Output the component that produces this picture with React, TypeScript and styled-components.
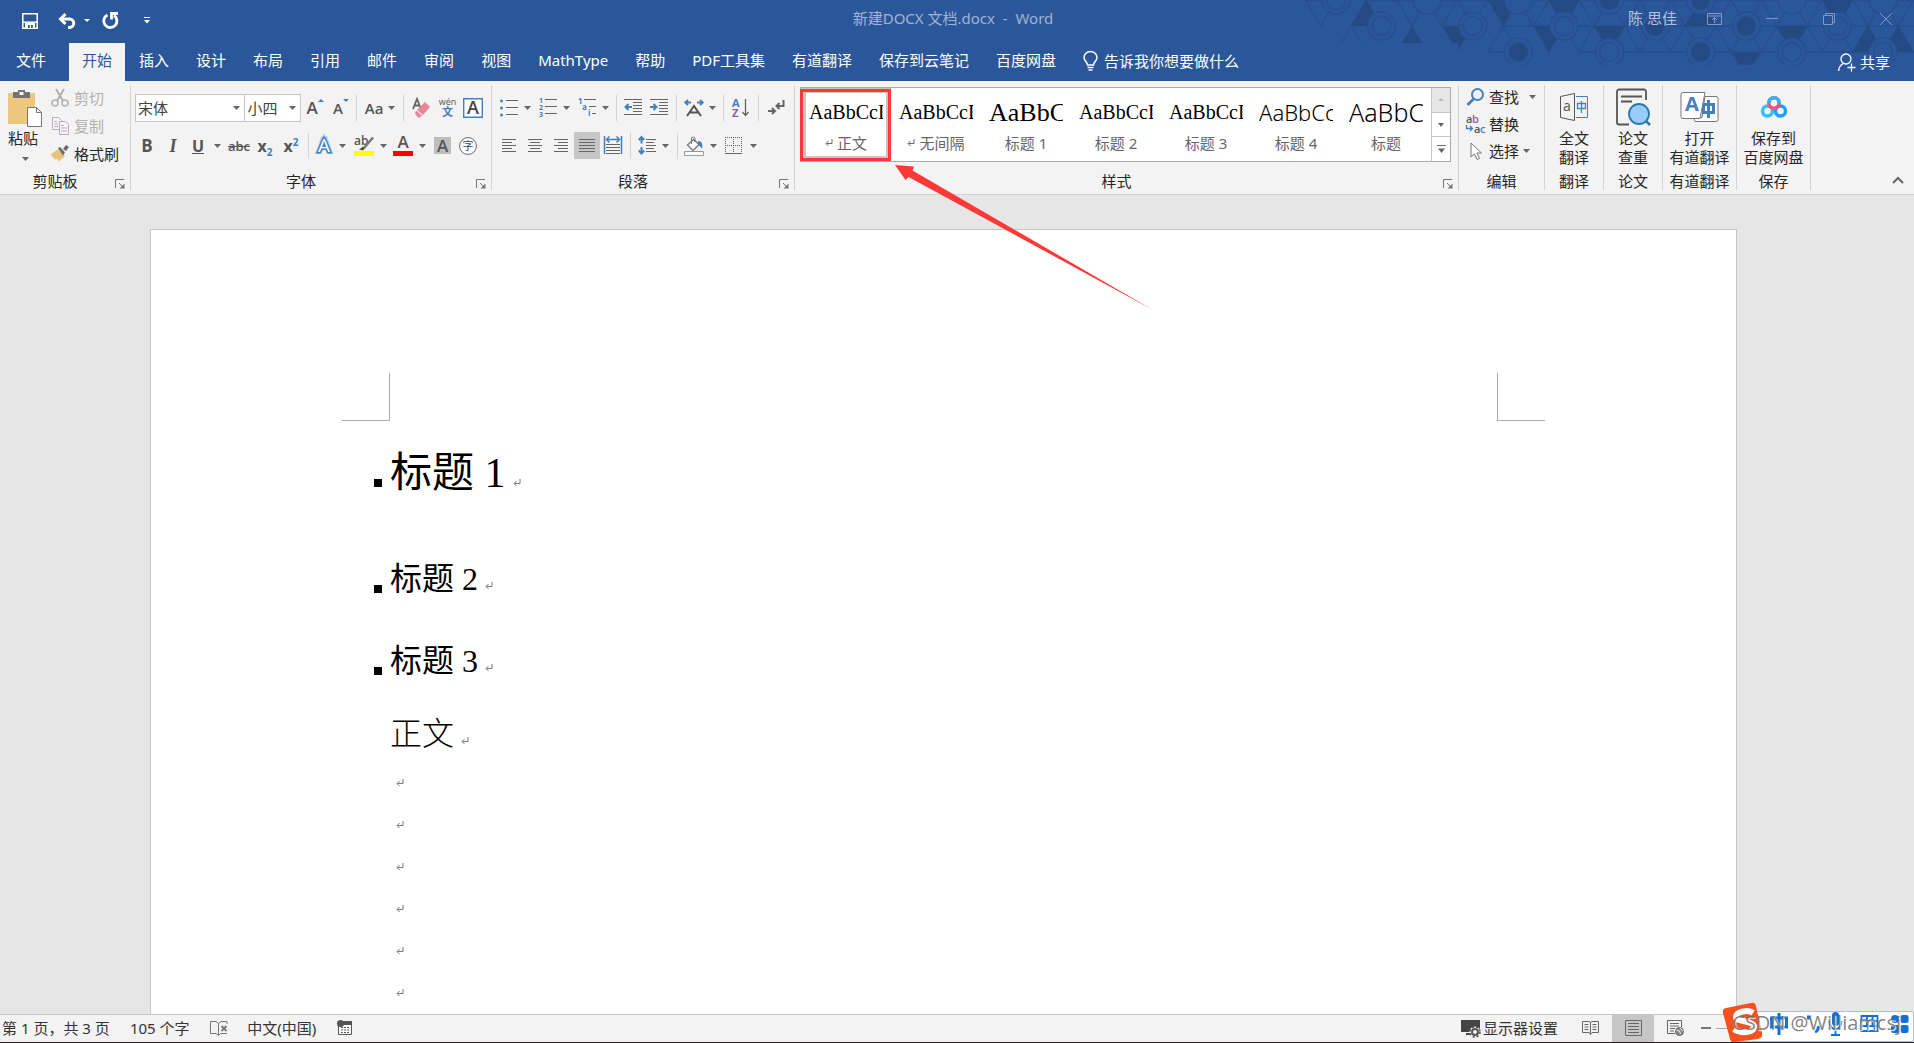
import React from "react";
import styled, { createGlobalStyle } from "styled-components";

const UI = `"Noto Sans", "Noto Sans CJK SC", sans-serif`;
const SERIF = `"Liberation Serif", "Noto Sans CJK SC", serif`;
const BLUE = "#2b579a";
const INK = "#666666";
const ACCENT = "#4480bd";

const Global = createGlobalStyle`
  *, *::before, *::after { box-sizing: border-box; }
  html, body { margin: 0; height: 100%; }
  body { font-family: ${UI}; font-size: 15px; line-height: 20px; color: #262626; overflow: hidden; }
  button, select { font: inherit; color: inherit; border: 0; margin: 0; padding: 0; background: none; }
  svg { display: block; flex: none; overflow: visible; }
  h1, h2, h3, p { margin: 0; font-weight: 400; }
`;

const App_ = styled.div`
  position: relative;
  display: flex;
  flex-direction: column;
  height: 100vh;
  background: #e6e6e6;
`;

/* ---------- title bar and tabs ---------- */
const Head = styled.header`
  position: relative;
  flex: none;
  background: ${BLUE};
  color: #fff;
`;
const Pattern = styled.svg`
  position: absolute;
  top: 0;
  right: 0;
`;
const TitleBar = styled.div`
  position: relative;
  display: grid;
  grid-template-columns: 1fr auto 1fr;
  height: 43px;
`;
const Quick = styled.div`
  display: flex;
  align-items: center;
  padding: 0 0 2px 10px;
`;
const QuickBtn = styled.button<{ $w: number }>`
  width: ${(p) => p.$w}px;
  height: 28px;
  display: flex;
  align-items: center;
  justify-content: center;
`;
const Title = styled.div`
  padding: 8px 8px 0 0;
  color: #9fb3d3;
  white-space: pre;
`;
const WinArea = styled.div`
  display: flex;
  justify-content: flex-end;
  align-items: flex-start;
  color: #a9bbd7;
`;
const User = styled.button`
  margin: 8px 9px 0 0;
  color: #b4c3dc;
`;
const WinBtn = styled.button`
  width: 57px;
  height: 38px;
  display: grid;
  place-items: center;
`;
const Tabs = styled.nav`
  position: relative;
  display: flex;
  gap: 1px;
  height: 38px;
`;
const Tab = styled.button<{ $kind?: "file" | "active" }>`
  height: 38px;
  padding: ${(p) => (p.$kind === "file" ? "0 22px 4px 16px" : "0 13px 4px")};
  white-space: nowrap;
  background: ${(p) => (p.$kind === "active" ? "#f3f3f3" : "transparent")};
  color: ${(p) => (p.$kind === "active" ? BLUE : "#fff")};
`;
const Tell = styled.button`
  display: flex;
  align-items: center;
  gap: 6px;
  padding: 0 13px 2px;
  white-space: nowrap;
`;
const Share = styled.button`
  display: flex;
  align-items: center;
  gap: 4px;
  margin-left: auto;
  padding-right: 24px;
`;

/* ---------- ribbon ---------- */
const Ribbon = styled.section`
  flex: none;
  display: flex;
  height: 114px;
  padding: 4px 0;
  background: #f3f3f3;
  border-bottom: 1px solid #d2d2d2;
  position: relative;
`;
const Group = styled.section<{ $w: number }>`
  width: ${(p) => p.$w}px;
  display: flex;
  flex-direction: column;
  border-right: 1px solid #d4d4d4;
`;
const GroupBody = styled.div`
  flex: 1;
  min-height: 0;
`;
const GroupFoot = styled.div`
  display: flex;
  height: 18px;
  align-items: center;
`;
const GroupName = styled.div`
  flex: 1;
  text-align: center;
  line-height: 20px;
  white-space: nowrap;
`;
const Launcher = styled.button`
  width: 20px;
  height: 18px;
  padding: 5px 0 0 5px;
`;
const Rows = styled.div`
  display: flex;
  flex-direction: column;
  gap: 11px;
  padding: 9px 4px 0;
`;
const Row = styled.div`
  display: flex;
  align-items: center;
  height: 27px;
`;
const Sep = styled.span`
  width: 8px;
  height: 26px;
  background: linear-gradient(#d4d4d4, #d4d4d4) center / 1px 100% no-repeat;
`;
const Tool = styled.button<{ $w: number; $on?: boolean; $gap?: number }>`
  width: ${(p) => p.$w}px;
  height: 27px;
  display: flex;
  align-items: center;
  justify-content: center;
  gap: ${(p) => p.$gap ?? 7}px;
  color: #555;
  background: ${(p) => (p.$on ? "#c6c6c6" : "transparent")};
`;
const Combo = styled.label<{ $w: number }>`
  width: ${(p) => p.$w}px;
  height: 28px;
  display: flex;
  align-items: center;
  padding-right: 4px;
  border: 1px solid #c6c6c6;
  background: #fff;
  color: #444;
  & + & { margin-left: -1px; }
  select { flex: 1; min-width: 0; height: 24px; padding-left: 2px; appearance: none; outline: 0; }
`;
const Glyph = styled.span<{ $size?: number; $bold?: boolean; $serif?: boolean; $italic?: boolean; $line?: string }>`
  font-family: ${(p) => (p.$serif ? SERIF : `"Open Sans", sans-serif`)};
  font-size: ${(p) => p.$size ?? 18}px;
  font-weight: ${(p) => (p.$bold ? 700 : 600)};
  font-style: ${(p) => (p.$italic ? "italic" : "normal")};
  text-decoration: ${(p) => p.$line ?? "none"};
  line-height: 20px;
  color: #555;
  sub, sup { font-size: 10px; line-height: 0; color: ${ACCENT}; }
`;
const Clip = styled.div`
  display: flex;
`;
const Paste = styled.button`
  width: 50px;
  display: flex;
  flex-direction: column;
  align-items: center;
  padding-top: 4px;
`;
const PasteText = styled.span`
  margin: 0 4px 9px 0;
  line-height: 20px;
`;
const Lines = styled.div<{ $h: number; $pad?: number }>`
  padding-left: ${(p) => p.$pad ?? 0}px;
  button { height: ${(p) => p.$h}px; padding-bottom: 3px; }
`;
const Line = styled.button<{ $off?: boolean }>`
  display: flex;
  align-items: center;
  gap: 4px;
  color: ${(p) => (p.$off ? "#b1b1b1" : "#262626")};
  white-space: nowrap;
`;
const Gallery = styled.div`
  display: flex;
  height: 75px;
  margin: 2px 7px 0 5px;
  border: 1px solid #ababab;
  background: #fff;
`;
const StyleItem = styled.button<{ $on?: boolean }>`
  width: 90px;
  height: 73px;
  padding: 0 3px;
  border: 5px solid ${(p) => (p.$on ? "#c4c4c4" : "transparent")};
  position: relative;
`;
const Sample = styled.span<{ $size: number; $sans?: boolean }>`
  display: block;
  height: 37px;
  overflow: hidden;
  white-space: nowrap;
  text-align: left;
  font-family: ${(p) => (p.$sans ? `"Noto Sans", sans-serif` : SERIF)};
  font-weight: ${(p) => (p.$sans ? 300 : 400)};
  font-size: ${(p) => p.$size}px;
  line-height: 35px;
  color: #000;
`;
const StyleName = styled.span`
  display: flex;
  align-items: center;
  justify-content: center;
  gap: 4px;
  line-height: 22px;
  color: #666;
  white-space: nowrap;
`;
const Callout = styled.span`
  position: absolute;
  inset: -4px -5px -5px -6px;
  border: 3px solid #fb3a38;
`;
const Arrow = styled.svg`
  position: absolute;
  left: 895px;
  top: 165px;
  z-index: 2;
  pointer-events: none;
`;
const GalleryBar = styled.div`
  display: flex;
  flex-direction: column;
  width: 19px;
  margin-left: auto;
  border-left: 1px solid #c6c6c6;
  button { flex: 1; display: grid; place-items: center; }
  button + button { border-top: 1px solid #c6c6c6; }
  button:first-child { background: #e6e6e6; }
`;
const Big = styled.button`
  width: 100%;
  display: flex;
  flex-direction: column;
  align-items: center;
  line-height: 19px;
  white-space: pre-line;
`;
const BigIcon = styled.span`
  height: 44px;
  display: grid;
  place-items: center;
`;
const Collapse = styled.button`
  align-self: flex-end;
  margin: 0 10px 6px auto;
`;

/* ---------- document ---------- */
const Canvas = styled.main`
  flex: 1;
  min-height: 0;
  display: flex;
  overflow: hidden;
  padding: 34px 177px 0 150px;
`;
const Sheet = styled.article`
  flex: 1;
  background: #fff;
  border: 1px solid #c6c6c6;
  border-bottom: 0;
  padding: 143px 191px 0;
  color: #000;
  font-family: ${SERIF};
`;
const Corners = styled.div`
  display: flex;
  justify-content: space-between;
`;
const Corner = styled.span<{ $side: "left" | "right" }>`
  width: 48px;
  height: 48px;
  border: 0 solid #ababab;
  border-bottom-width: 1px;
  border-${(p) => (p.$side === "left" ? "right" : "left")}-width: 1px;
`;
const Text = styled.div`
  padding: 0 48px;
`;
const Para = styled.div<{ $h: number; $top: number; $size?: number }>`
  position: relative;
  height: ${(p) => p.$h}px;
  margin-top: ${(p) => p.$top}px;
  display: flex;
  align-items: baseline;
  gap: 7px;
  h1, h2, h3, p { font-size: ${(p) => p.$size ?? 32}px; line-height: ${(p) => p.$h}px; }
  p { font-weight: 300; }
`;
const Square = styled.span`
  position: absolute;
  left: -16px;
  bottom: calc(50% - 14px);
  width: 8px;
  height: 8px;
  background: #000;
`;
const Blanks = styled.div`
  padding-top: 13px;
`;
const Blank = styled.div`
  height: 42px;
  padding: 12px 0 0 6px;
`;

/* ---------- status bar ---------- */
const Status = styled.footer`
  flex: none;
  display: flex;
  align-items: center;
  height: 29px;
  background: #f3f3f3;
  border-top: 1px solid #c6c6c6;
  border-bottom: 1px solid #231f20;
  color: #333;
  position: relative;
`;
const StatusBtn = styled.button<{ $w?: number; $on?: boolean }>`
  height: 27px;
  width: ${(p) => (p.$w ? p.$w + "px" : "auto")};
  padding: 0 0 1px ${(p) => (p.$w ? 0 : 2)}px;
  display: flex;
  align-items: center;
  gap: 2px;
  justify-content: ${(p) => (p.$w ? "center" : "flex-start")};
  white-space: nowrap;
  background: ${(p) => (p.$on ? "#c6c6c6" : "transparent")};
`;
const Spacer = styled.span`
  flex: 1;
`;
const Views = styled.div`
  display: flex;
  margin-left: 10px;
`;
const ZoomArea = styled.div`
  width: 218px;
  display: flex;
  align-items: center;
  gap: 5px;
  padding-left: 5px;
`;
const Ime = styled.div`
  position: absolute;
  right: 0;
  bottom: 0;
  width: 180px;
  height: 31px;
  background: #fff;
  border: 1px solid #a9c3e6;
  border-radius: 2px;
`;
const ImeIcons = styled.svg`
  position: absolute;
  right: 0;
  bottom: 0;
`;
const Watermark = styled.span`
  position: absolute;
  right: 13px;
  bottom: 4px;
  font: 20px/30px "Open Sans", sans-serif;
  color: rgba(100, 100, 100, 0.8);
  text-shadow: 1px 1px 1px #fff;
`;

const Caret = ({ c = INK }: { c?: string }) => (
  <svg width="7" height="4"><path d="M0 0h7L3.5 4z" fill={c} /></svg>
);

const Mark = ({ c = "#777" }: { c?: string }) => (
  <svg width="8" height="8" viewBox="0 0 8 8" fill="none" stroke={c}>
    <path d="M7 0v4.5H1.500M3.500 2L1 4.500L3.500 7" />
  </svg>
);

/* Triangular lattice with circles on every third node. */
const LEFT = 1300;
const ROWY = [0, 26, 52];
const node = (row: number, k: number): [number, number] => [
  (row === 1 ? 1320.7 : 1305.5) + 30.4 * k - LEFT,
  ROWY[row],
];
const pts = (list: [number, number][]) => list.map((p) => p.join(",")).join(" ");
const dark: [number, number][][] = [
  [[0, 2], [1, 1], [1, 2]], [[0, 6], [0, 7], [1, 6]], [[0, 8], [0, 9], [1, 8]],
  [[0, 13], [1, 12], [1, 13]], [[0, 17], [0, 18], [1, 17]],
  [[1, 3], [2, 3], [2, 4]], [[1, 4], [1, 5], [2, 5]], [[1, 7], [1, 8], [2, 8]],
  [[1, 9], [1, 10], [2, 10]], [[1, 15], [1, 16], [2, 16]],
  [[1, 18], [2, 18], [2, 19]], [[1, 19], [2, 19], [2, 20]],
];
const edges: [number, number, number, number][] = [
  [0, 0, 1, 0], [0, 1, 1, 0], [0, 2, 1, 1], [0, 3, 1, 3], [0, 4, 1, 3], [0, 4, 1, 4],
  [0, 5, 1, 4], [0, 5, 1, 5], [0, 6, 1, 5], [1, 1, 2, 1], [1, 1, 2, 2],
  [1, 6, 2, 6], [1, 6, 2, 7], [2, 6, 2, 7], [2, 9, 2, 20], [1, 6, 1, 20],
];
for (let k = 7; k <= 20; k++) edges.push([0, k, 1, k - 1], [0, k, 1, k]);
for (let k = 8; k <= 19; k++) edges.push([1, k, 2, k + 1], [1, k, 2, k]);
const rings: [number, number, "fill" | "ring" | "none"][] = [
  [0, 1, "ring"], [0, 4, "none"], [0, 7, "none"], [0, 10, "fill"], [0, 13, "fill"], [0, 16, "none"], [0, 19, "none"],
  [1, 2, "ring"], [1, 5, "ring"], [1, 8, "ring"], [1, 11, "fill"], [1, 14, "fill"], [1, 17, "ring"],
  [2, 7, "fill"], [2, 10, "ring"], [2, 13, "fill"], [2, 16, "ring"], [2, 19, "ring"],
];
const HexPattern = () => (
  <Pattern width="614" height="66" viewBox="0 0 614 66" aria-hidden="true">
    <clipPath id="hex"><path d="M0 0H614V65H158V43H0z" /></clipPath>
    <g clipPath="url(#hex)" stroke="#264f8d" strokeWidth="1.400" fill="none">
      <path d="M5 .5h25M66 .5h548" />
      {edges.map(([a, b, c, d], i) => {
        const [x1, y1] = node(a, b);
        const [x2, y2] = node(c, d);
        return <path key={i} d={`M${x1} ${y1}L${x2} ${y2}`} />;
      })}
      {dark.map((t, i) => (
        <polygon key={i} points={pts(t.map(([r, k]) => node(r, k)))} fill="#244a83" stroke="none" />
      ))}
      <path d="M431 52h30l-8 13h-14z" fill="#244a83" />
      {rings.map(([r, k, kind], i) => {
        const [x, y] = node(r, k);
        return (
          <g key={i}>
            <circle cx={x} cy={y} r="14" fill={BLUE} />
            {kind !== "none" && <circle cx={x} cy={y} r="9.500" fill={kind === "fill" ? "#244a83" : "none"} />}
          </g>
        );
      })}
    </g>
  </Pattern>
);

const hl = (rows: [number, number, number][], c = INK) =>
  rows.map(([x1, x2, y], i) => <path key={i} d={`M${x1} ${y + 0.5}H${x2}`} stroke={c} strokeWidth="1" />);

const AlignIcon = ({ kind }: { kind: "l" | "c" | "r" | "j" }) => {
  const w = kind === "j" ? 16 : 14;
  return (
    <svg width={w} height="14">
      {[1, 4, 7, 10, 13].map((y, i) => {
        const short = kind !== "j" && i % 2 === 1;
        const a = short ? (kind === "l" ? 0 : kind === "c" ? 2 : 4) : 0;
        const b = short ? (kind === "l" ? 10 : kind === "c" ? 12 : 14) : w;
        return <path key={y} d={`M${a} ${y - 0.5}H${b}`} stroke={INK} />;
      })}
    </svg>
  );
};

const tabs = ["插入", "设计", "布局", "引用", "邮件", "审阅", "视图", "MathType", "帮助", "PDF工具集", "有道翻译", "保存到云笔记", "百度网盘"];

const samples = [
  { name: "正文", text: "AaBbCcDd", size: 20, mark: true, on: true },
  { name: "无间隔", text: "AaBbCcDd", size: 20, mark: true },
  { name: "标题 1", text: "AaBbCcD", size: 26 },
  { name: "标题 2", text: "AaBbCcDd", size: 20 },
  { name: "标题 3", text: "AaBbCcDd", size: 20 },
  { name: "标题 4", text: "AaBbCcD", size: 22, sans: true },
  { name: "标题", text: "AaBbCcD", size: 25, sans: true },
];

const RibbonGroup = ({ w, name, launcher, children }: { w: number; name: string; launcher?: boolean; children: React.ReactNode }) => (
  <Group $w={w} aria-label={name}>
    <GroupBody>{children}</GroupBody>
    <GroupFoot>
      <GroupName>{name}</GroupName>
      {launcher && (
        <Launcher aria-label={name + "设置"}>
          <svg width="10" height="10" fill="none" stroke="#777">
            <path d="M.5 9V.5H9M4 4l4 4" /><path d="M9.500 4.500v5h-5z" fill="#777" stroke="none" />
          </svg>
        </Launcher>
      )}
    </GroupFoot>
  </Group>
);

export default function App() {
  return (
    <App_>
      <Global />
      <Head>
        <HexPattern />
        <TitleBar>
          <Quick>
            <QuickBtn $w={40} aria-label="保存">
              <svg width="16" height="16" fill="none" stroke="#fff" strokeWidth="1.500">
                <path d="M.8 .8h14.400v14.400H.8z" /><path d="M3 10h10v5H3z" fill="#fff" stroke="none" />
                <path d="M1 9.200h14" /><path d="M6 12h1.800v3H6zM9 12h1.800v3H9z" fill={BLUE} stroke="none" />
              </svg>
            </QuickBtn>
            <QuickBtn $w={34} aria-label="撤消">
              <svg width="18" height="16" fill="none" stroke="#fff" strokeWidth="3">
                <path d="M3 6h8.500a4.200 4.200 0 0 1 0 8.500H10" /><path d="M7.500 1L2.500 6l5 5" />
              </svg>
            </QuickBtn>
            <svg width="6" height="4"><path d="M0 0h6L3 3z" fill="#fff" /></svg>
            <QuickBtn $w={41} aria-label="重复">
              <svg width="17" height="17" fill="none" stroke="#fff" strokeWidth="2.800">
                <path d="M5.500 3a6.600 6.600 0 1 0 6.500.5" /><path d="M9.500 7.500V1.500H16" />
              </svg>
            </QuickBtn>
            <QuickBtn $w={31} aria-label="自定义快速访问工具栏">
              <svg width="6" height="7"><path d="M0 .5h6" stroke="#fff" /><path d="M0 3h6L3 6.500z" fill="#fff" /></svg>
            </QuickBtn>
          </Quick>
          <Title>新建DOCX 文档.docx{"  -  "}Word</Title>
          <WinArea>
            <User>陈 思佳</User>
            <WinBtn aria-label="功能区显示选项">
              <svg width="15" height="12" fill="none" stroke="#7f9ac5"><path d="M.5 .5h14v11H.5zM.5 3h14M7.500 10V5M5 7l2.500-2.500L10 7" /></svg>
            </WinBtn>
            <WinBtn aria-label="最小化"><svg width="12" height="2"><path d="M0 .5h12" stroke="#7f9ac5" /></svg></WinBtn>
            <WinBtn aria-label="还原">
              <svg width="12" height="12" fill="none" stroke="#7f9ac5"><path d="M.5 2.500h9v9h-9zM2.500 2V.5h9v9H10" /></svg>
            </WinBtn>
            <WinBtn aria-label="关闭"><svg width="12" height="12" stroke="#7f9ac5"><path d="M0 0l12 12M12 0L0 12" /></svg></WinBtn>
          </WinArea>
        </TitleBar>
        <Tabs>
          <Tab $kind="file">文件</Tab>
          <Tab $kind="active">开始</Tab>
          {tabs.map((t) => <Tab key={t}>{t}</Tab>)}
          <Tell>
            <svg width="15" height="20" fill="none" stroke="#fff" strokeWidth="1.500">
              <path d="M4.500 14c0-3-3.500-4-3.500-7.500a6.500 6 0 0 1 13 0c0 3.500-3.500 4.500-3.500 7.500z" /><path d="M4.500 16.500h6M5.500 19h4" />
            </svg>
            告诉我你想要做什么
          </Tell>
          <Share>
            <svg width="18" height="19" fill="none" stroke="#fff" strokeWidth="1.300">
              <circle cx="8" cy="6" r="5" /><path d="M.7 18c0-4 2-6 4.500-7.500M13.500 10.500v8M9.500 14.500h8" />
            </svg>
            共享
          </Share>
        </Tabs>
      </Head>

      <Ribbon>
        <RibbonGroup w={131} name="剪贴板" launcher>
          <Clip>
            <Paste>
              <svg width="36" height="39">
                <path d="M1 4h27v31H1z" fill="#eec77e" />
                <path d="M6 3h5V1h7v2h5v6H6z" fill="#737373" /><path d="M12.500 3h4v3h-4z" fill="#f3f3f3" />
                <path d="M20.500 18.500h9l5 5v14h-14z" fill="#fff" stroke="#777" /><path d="M29.500 18.500v5h5" fill="none" stroke="#777" />
              </svg>
              <PasteText>粘贴</PasteText>
              <Caret />
            </Paste>
            <Lines $h={28}>
              <Line $off>
                <svg width="20" height="18" fill="none" stroke="#b1b1b1" strokeWidth="1.500">
                  <path d="M6 0l7 12M14 0L7 12" strokeWidth="2" /><circle cx="5" cy="14" r="3" /><circle cx="15" cy="14" r="3" />
                </svg>
                剪切
              </Line>
              <Line $off>
                <svg width="20" height="18" fill="#f8f4f8" stroke="#b5adb8">
                  <path d="M2.500 .5h6l3 3v9h-9z" /><path d="M4 4.500h3M4 7h4M4 9.500h4" />
                  <path d="M9.500 4.500h6l3 3v10h-9z" /><path d="M11 8.500h3M11 11h6M11 14h6" />
                </svg>
                复制
              </Line>
              <Line>
                <svg width="20" height="17">
                  <path d="M8 4l7 7-6 5.500L6 13l-1 2-4.500-5.500z" fill="#eac27c" />
                  <path d="M8 3l2-1 5 5.500-2 3zM13 4l3-4 3 2-3 4z" fill="#6a6a6a" />
                </svg>
                格式刷
              </Line>
            </Lines>
          </Clip>
        </RibbonGroup>

        <RibbonGroup w={361} name="字体" launcher>
          <Rows>
            <Row>
              <Combo $w={111}><select aria-label="字体"><option>宋体</option></select><Caret /></Combo>
              <Combo $w={57}><select aria-label="字号"><option>小四</option></select><Caret /></Combo>
              <Tool $w={28} $gap={0} aria-label="增大字号">
                <Glyph $size={17}>A</Glyph><svg width="6" height="18"><path d="M0 3h6L3 0z" fill={ACCENT} /></svg>
              </Tool>
              <Tool $w={24} $gap={0} aria-label="缩小字号">
                <Glyph $size={15}>A</Glyph><svg width="6" height="18"><path d="M0 0h6L3 3z" fill={ACCENT} /></svg>
              </Tool>
              <Sep />
              <Tool $w={39} $gap={5} aria-label="更改大小写"><Glyph $size={15}>Aa</Glyph><Caret /></Tool>
              <Sep />
              <Tool $w={28} aria-label="清除格式">
                <svg width="19" height="21">
                  <path d="M1 12L5 2l4 10M2.500 8.500h5" stroke={INK} strokeWidth="1.800" fill="none" />
                  <path d="M13 5l5 5-7 8-6-5z" fill="#ea8496" /><path d="M4 13.500l6 5-2 2H6l-3-4z" fill="#ea8496" />
                </svg>
              </Tool>
              <Tool $w={24} aria-label="拼音指南">
                <svg width="17" height="20">
                  <text x="8.500" y="7" textAnchor="middle" fontSize="9" fontFamily="Open Sans" fill="#555">wén</text>
                  <text x="8.500" y="18" textAnchor="middle" fontSize="11" fontWeight="700" fontFamily="Noto Sans CJK SC" fill={ACCENT}>文</text>
                </svg>
              </Tool>
              <Tool $w={28} aria-label="字符边框">
                <svg width="20" height="20">
                  <path d="M.7 .7h18.600v18.600H.7z" fill="#fff" stroke={ACCENT} strokeWidth="1.400" />
                  <text x="10" y="16" textAnchor="middle" fontSize="18" fontWeight="600" fontFamily="Open Sans" fill="#444">A</text>
                </svg>
              </Tool>
            </Row>
            <Row>
              <Tool $w={24} aria-label="加粗"><Glyph $size={17} $bold>B</Glyph></Tool>
              <Tool $w={28} aria-label="倾斜"><Glyph $size={18} $bold $serif $italic>I</Glyph></Tool>
              <Tool $w={39} $gap={10} aria-label="下划线"><Glyph $size={16} $bold $line="underline">U</Glyph><Caret /></Tool>
              <Tool $w={26} aria-label="删除线"><Glyph $size={13} $line="line-through">abc</Glyph></Tool>
              <Tool $w={26} aria-label="下标"><Glyph $size={16} $bold>x<sub>2</sub></Glyph></Tool>
              <Tool $w={26} aria-label="上标"><Glyph $size={16} $bold>x<sup>2</sup></Glyph></Tool>
              <Sep />
              <Tool $w={38} aria-label="文本效果">
                <svg width="16" height="19">
                  <text x="8" y="16" textAnchor="middle" fontSize="19" fontWeight="600" fontFamily="Open Sans" fill="#fff" stroke="#b5d3f0" strokeWidth="4">A</text>
                  <text x="8" y="16" textAnchor="middle" fontSize="19" fontWeight="400" fontFamily="Open Sans" fill="#fff" stroke={ACCENT} strokeWidth="3">A</text>
                  <text x="8" y="16" textAnchor="middle" fontSize="19" fontWeight="400" fontFamily="Open Sans" fill="#fff" aria-hidden="true">A</text>
                </svg>
                <Caret />
              </Tool>
              <Tool $w={40} $gap={6} aria-label="突出显示">
                <svg width="20" height="20">
                  <text x="0" y="9" fontSize="12" fontWeight="600" fontFamily="Open Sans" fill="#555">ab</text>
                  <path d="M19 1.500L10 12" stroke="#777" strokeWidth="2.500" /><path d="M5 13.500l4-3 2 2-2 2z" fill="#555" />
                  <path d="M0 15h20v5H0z" fill="#ff0" />
                </svg>
                <Caret />
              </Tool>
              <Tool $w={39} $gap={6} aria-label="字体颜色">
                <svg width="20" height="20">
                  <text x="10" y="12" textAnchor="middle" fontSize="17" fontWeight="600" fontFamily="Open Sans" fill="#555">A</text>
                  <path d="M0 15h20v5H0z" fill="#f00" />
                </svg>
                <Caret />
              </Tool>
              <Tool $w={26} aria-label="字符底纹">
                <svg width="17" height="17"><path d="M0 0h17v17H0z" fill="#bdbdbd" />
                  <text x="8.500" y="14.500" textAnchor="middle" fontSize="17" fontWeight="600" fontFamily="Open Sans" fill="#555">A</text></svg>
              </Tool>
              <Tool $w={26} aria-label="带圈字符">
                <svg width="18" height="18"><circle cx="9" cy="9" r="8.400" fill="#fff" stroke={INK} />
                  <text x="9" y="13" textAnchor="middle" fontSize="11" fontFamily="Noto Sans CJK SC" fill="#444">字</text></svg>
              </Tool>
            </Row>
          </Rows>
        </RibbonGroup>

        <RibbonGroup w={303} name="段落" launcher>
          <Rows>
            <Row>
              <Tool $w={39} $gap={6} aria-label="项目符号">
                <svg width="18" height="18" fill={ACCENT}>
                  <circle cx="1.500" cy="2" r="1.500" /><circle cx="1.500" cy="9" r="1.500" /><circle cx="1.500" cy="16" r="1.500" />
                  {hl([[6, 18, 1], [6, 18, 8], [6, 18, 15]])}
                </svg>
                <Caret />
              </Tool>
              <Tool $w={39} $gap={6} aria-label="编号">
                <svg width="18" height="19" fill={ACCENT} fontSize="7" fontWeight="700" fontFamily="Open Sans">
                  <text x="0" y="5">1</text><text x="0" y="12">2</text><text x="0" y="19">3</text>
                  {hl([[6, 18, 1], [6, 18, 8], [6, 18, 15]])}
                </svg>
                <Caret />
              </Tool>
              <Tool $w={38} $gap={5} aria-label="多级列表">
                <svg width="19" height="19" fill={ACCENT} fontSize="8" fontWeight="700" fontFamily="Open Sans">
                  <text x="0" y="6">1</text><text x="4" y="12">a</text><text x="10" y="18">i</text>
                  {hl([[6, 18, 1], [11, 18, 8], [14, 18, 15]])}
                </svg>
                <Caret />
              </Tool>
              <Sep />
              {["减少缩进量", "增加缩进量"].map((n, i) => (
                <Tool key={n} $w={26} aria-label={n}>
                  <svg width="18" height="17">
                    {hl([[0, 18, 0], [9, 18, 3], [9, 18, 6], [9, 18, 9], [9, 18, 12], [0, 18, 15]])}
                    <path d={i ? "M0 8h6M3.500 5L6.500 8l-3 3" : "M8 8H2M4.500 5l-3 3 3 3"} fill="none" stroke={ACCENT} strokeWidth="2" />
                  </svg>
                </Tool>
              ))}
              <Sep />
              <Tool $w={39} $gap={5} aria-label="中文版式">
                <svg width="20" height="18" fill="none">
                  <path d="M3 17L10 7l7 10M5.500 13.500h9" stroke="#555" strokeWidth="2" />
                  <path d="M7 3.500H2M4 .8L1.200 3.500 4 6.200M13 3.500h5M16 .8l2.800 2.700L16 6.200" stroke={ACCENT} strokeWidth="1.800" />
                </svg>
                <Caret />
              </Tool>
              <Sep />
              <Tool $w={27} aria-label="排序">
                <svg width="18" height="20" fontSize="11" fontWeight="700" fontFamily="Open Sans">
                  <text x="0" y="9" fill={ACCENT}>A</text><text x="0" y="19" fill="#8d5ab0">Z</text>
                  <path d="M13.500 1v16M10.500 14l3 3.500 3-3.500" fill="none" stroke={INK} strokeWidth="1.300" />
                </svg>
              </Tool>
              <Sep />
              <Tool $w={28} aria-label="显示编辑标记">
                <svg width="17" height="15" fill="none" stroke={INK} strokeWidth="2">
                  <path d="M15.500 0v6H9M11.500 3L8.500 6l3 3M0 11h6M4 8l3 3-3 3" />
                </svg>
              </Tool>
            </Row>
            <Row>
              <Tool $w={26} aria-label="左对齐"><AlignIcon kind="l" /></Tool>
              <Tool $w={26} aria-label="居中"><AlignIcon kind="c" /></Tool>
              <Tool $w={26} aria-label="右对齐"><AlignIcon kind="r" /></Tool>
              <Tool $w={26} $on aria-label="两端对齐"><AlignIcon kind="j" /></Tool>
              <Tool $w={26} aria-label="分散对齐">
                <svg width="18" height="19">
                  <path d="M.5 0v18M17.500 0v18M3 3.500h12M5.500 .5L2.500 3.500l3 3M12.500 .5l3 3-3 3" fill="none" stroke={ACCENT} strokeWidth="1.500" />
                  {hl([[2, 16, 8], [2, 16, 11], [2, 16, 14], [2, 16, 17]])}
                </svg>
              </Tool>
              <Sep />
              <Tool $w={39} $gap={6} aria-label="行距">
                <svg width="18" height="19">
                  <path d="M3.500 1.500v6M.8 4l2.700-3 2.700 3M3.500 11v6M.8 14.500l2.700 3 2.700-3" fill="none" stroke={ACCENT} strokeWidth="2" />
                  {hl([[8, 18, 3], [8, 16, 6], [8, 18, 9], [8, 16, 12], [8, 18, 15]])}
                </svg>
                <Caret />
              </Tool>
              <Sep />
              <Tool $w={39} $gap={6} aria-label="底纹">
                <svg width="20" height="20" fill="none">
                  <path d="M3.500 9l6-5.500 5.500 5-6 6z" fill="#fff" stroke="#777" strokeWidth="1.300" />
                  <path d="M7.500 8V2a2 2 0 0 1 3.500 0v4" stroke="#777" /><path d="M14 5c4 0 5 3 4 8-1-2-2-3-4-4z" fill={ACCENT} />
                  <path d="M.5 15.500h19v4H.5z" fill="#fff" stroke="#999" />
                </svg>
                <Caret />
              </Tool>
              <Tool $w={41} $gap={8} aria-label="边框">
                <svg width="17" height="17" fill="none" stroke={INK}>
                  <path d="M0 .5h17M.5 0v17M16.500 0v17M8.500 0v17M0 8.500h17" strokeDasharray="1 1" /><path d="M0 16.500h17" />
                </svg>
                <Caret />
              </Tool>
            </Row>
          </Rows>
        </RibbonGroup>

        <RibbonGroup w={664} name="样式" launcher>
          <Gallery>
            {samples.map((s) => (
              <StyleItem key={s.name} $on={s.on}>
                <Sample $size={s.size} $sans={s.sans}>{s.text}</Sample>
                <StyleName>{s.mark && <Mark c="#666" />}{s.name}</StyleName>
                {s.on && <Callout />}
              </StyleItem>
            ))}
            <GalleryBar>
              <button aria-label="上一行"><svg width="6" height="4"><path d="M0 3h6L3 0z" fill="#bbb" /></svg></button>
              <button aria-label="下一行"><svg width="6" height="4"><path d="M0 0h6L3 4z" fill={INK} /></svg></button>
              <button aria-label="其他"><svg width="9" height="8"><path d="M0 .5h9" stroke={INK} /><path d="M1 3.500h7L4.500 8z" fill={INK} /></svg></button>
            </GalleryBar>
          </Gallery>
        </RibbonGroup>

        <RibbonGroup w={86} name="编辑">
          <Lines $h={27} $pad={6}>
            <Line>
              <svg width="20" height="19" fill="none" stroke={ACCENT}><circle cx="12.500" cy="6.500" r="5.500" strokeWidth="2" /><path d="M8.500 11L2.500 17" strokeWidth="2.800" /></svg>
              查找
              <svg width="14" height="4"><path d="M6 0h7l-3.500 4z" fill={INK} /></svg>
            </Line>
            <Line>
              <svg width="20" height="19" fontFamily="Open Sans" fontSize="11" fontWeight="600">
                <text x="1" y="8" fill="#555">a</text><text x="7" y="8" fill="#8d5ab0">b</text>
                <text x="9" y="18" fill="#555">a</text><text x="15" y="18" fill={ACCENT}>c</text>
                <path d="M1.500 10v3.500H7M5 11l2.500 2.500L5 16" stroke={ACCENT} fill="none" strokeWidth="1.300" />
              </svg>
              替换
            </Line>
            <Line>
              <svg width="20" height="19"><path d="M6 1v14l3.500-3 2.500 5.500 2.500-1-2.500-5.500h4.500z" fill="#fff" stroke="#777" /></svg>
              选择
              <Caret />
            </Line>
          </Lines>
        </RibbonGroup>

        <RibbonGroup w={59} name="翻译">
          <Big>
            <BigIcon>
              <svg width="30" height="30" fill="none">
                <path d="M1.500 4.500l14-3v27l-14-3z" stroke="#555" /><path d="M17 4.500h11.500v21H17" stroke={ACCENT} />
                <text x="4" y="19" fontSize="14" fontFamily="Open Sans" fill="#555">a</text>
                <path d="M18.500 11.500h8v5h-8zM22.500 9v12" stroke="#3f7fd6" strokeWidth="1.300" />
              </svg>
            </BigIcon>
            {"全文\n翻译"}
          </Big>
        </RibbonGroup>
        <RibbonGroup w={59} name="论文">
          <Big>
            <BigIcon>
              <svg width="36" height="38" fill="none">
                <path d="M31 12V3.500a2 2 0 0 0-2-2H4a2 2 0 0 0-2 2v31a2 2 0 0 0 2 2h10" stroke="#555" strokeWidth="1.800" />
                <path d="M6 8.500h21M6 13.500h11" stroke="#555" strokeWidth="2" /><path d="M31 33l4 4" stroke="#2878ad" strokeWidth="2.500" />
                <circle cx="24" cy="26" r="10" fill="#99ccfa" stroke="#2878ad" strokeWidth="1.800" />
              </svg>
            </BigIcon>
            {"论文\n查重"}
          </Big>
        </RibbonGroup>
        <RibbonGroup w={74} name="有道翻译">
          <Big>
            <BigIcon>
              <svg width="40" height="32">
                <path d="M25 5.500h11q2 0 2 2v21q0 2-2 2H15l-1-3 8-1z" fill="#fff" stroke="#777" />
                <path d="M23.500 13.500h10v8h-10zM28.500 9v18" stroke={ACCENT} strokeWidth="3" fill="none" />
                <path d="M3 1.500h22L20 27.500H3q-2 0-2-2v-22q0-2 2-2z" fill="#fff" stroke="#777" />
                <text x="12" y="20" textAnchor="middle" fontSize="20" fontWeight="700" fontFamily="Open Sans" fill={ACCENT}>A</text>
              </svg>
            </BigIcon>
            {"打开\n有道翻译"}
          </Big>
        </RibbonGroup>
        <RibbonGroup w={74} name="保存">
          <Big>
            <BigIcon>
              <svg width="28" height="22" fill="none" strokeWidth="3.500">
                <circle cx="7.500" cy="15" r="5" stroke="#2fc1fb" /><circle cx="20.500" cy="15" r="5" stroke="#1ea0fa" />
                <circle cx="14" cy="7" r="5.200" stroke="#f6507a" /><path d="M8.800 7a5.200 5.200 0 0 1 10.400 0" stroke="#29b6f6" />
              </svg>
            </BigIcon>
            {"保存到\n百度网盘"}
          </Big>
        </RibbonGroup>
        <Collapse aria-label="折叠功能区"><svg width="12" height="8" fill="none" stroke={INK} strokeWidth="2"><path d="M1 7l5-5 5 5" /></svg></Collapse>
      </Ribbon>

      <Canvas>
        <Sheet>
          <Corners><Corner $side="left" /><Corner $side="right" /></Corners>
          <Text>
            <Para $top={20} $h={64} $size={42}><Square /><h1>标题 1</h1><Mark /></Para>
            <Para $top={54} $h={40}><Square /><h2>标题 2</h2><Mark /></Para>
            <Para $top={42} $h={40}><Square /><h3>标题 3</h3><Mark /></Para>
            <Para $top={33} $h={40}><p>正文</p><Mark /></Para>
            <Blanks>{[0, 1, 2, 3, 4, 5].map((i) => <Blank key={i}><Mark /></Blank>)}</Blanks>
          </Text>
        </Sheet>
      </Canvas>

      <Status>
        <StatusBtn>第 1 页，共 3 页</StatusBtn>
        <StatusBtn $w={100}>105 个字</StatusBtn>
        <StatusBtn $w={18} aria-label="校对">
          <svg width="18" height="15" fill="none" stroke="#777"><path d="M8.500 2.500L6 .5H.5v12H6l2.500 2 2-2H17M8.500 2.500v12M8.500 2.500l2.500-2h6V3" /><path d="M11.500 5l5 5M16.500 5l-5 5" strokeWidth="1.800" /></svg>
        </StatusBtn>
        <StatusBtn $w={108}>中文(中国)</StatusBtn>
        <StatusBtn $w={18} aria-label="宏">
          <svg width="16" height="16" fill="none" stroke="#555"><path d="M1.500 2.500h13v12h-13z" fill="#fff" /><path d="M6 1h9v4H6z" fill="#555" stroke="none" /><path d="M4 7.500h9M4 10h9M4 12.500h9" strokeDasharray="2 1" /><circle cx="3.500" cy="3.500" r="3.500" fill="#555" stroke="none" /></svg>
        </StatusBtn>
        <Spacer />
        <StatusBtn>
          <svg width="20" height="19" viewBox="0 0 20 19"><path d="M0 1h19v12H0zM5 14h5v2H5z" fill="#444" />
            <circle cx="14" cy="13" r="4" fill="#f3f3f3" stroke="#f3f3f3" strokeWidth="3" /><circle cx="14" cy="13" r="3" fill="none" stroke="#555" strokeWidth="2" /><circle cx="14" cy="13" r="5" fill="none" stroke="#555" strokeWidth="1.500" strokeDasharray="2 2" /></svg>
          显示器设置
        </StatusBtn>
        <Views>
          <StatusBtn $w={44} aria-label="阅读视图">
            <svg width="17" height="16" fill="none" stroke={INK}><path d="M.5 1.500H7l1.500 1L10 1.500h6.500v11H10l-1.500 2-1.500-2H.5zM8.500 2v12M2.500 4.500h4M2.500 7h4M2.500 9.500h4M10.500 4.500h4M10.500 7h4M10.500 9.500h4" /></svg>
          </StatusBtn>
          <StatusBtn $w={42} $on aria-label="页面视图">
            <svg width="17" height="16" fill="none" stroke={INK}><path d="M.5 .5h16v15H.5zM3 3.500h11M3 6.500h11M3 9.500h11M3 12.500h11" /></svg>
          </StatusBtn>
          <StatusBtn $w={42} aria-label="Web 版式视图">
            <svg width="17" height="16" fill="none" stroke={INK}><path d="M8 13.500H.5V.5h14V7M3 3.500h9M3 6h9M3 8.500h5M3 11h4" /><circle cx="12.500" cy="11.500" r="4" fill="#888" /><path d="M9.500 10l3 1 1 3M13 8l3 3" stroke="#f3f3f3" /></svg>
          </StatusBtn>
        </Views>
        <ZoomArea><svg width="10" height="3"><path d="M0 0h10v2H0z" fill="#777" /></svg><svg width="60" height="1"><path d="M0 0h60v1H0z" fill="#aaa" /></svg></ZoomArea>
        <Ime />
        <ImeIcons width="192" height="40" viewBox="0 0 192 40" fill="none" stroke="#1070dc" strokeWidth="3">
          <g stroke="none">
            <path d="M4 6L29 1q4-1 5 3l6 27q1 5-4 6L13 40q-4 1-5-3L1 11q-1-4 3-5z" fill="#f4511e" />
            <path d="M31 11c-6-4-17-1-17 4s19 4 18 10-13 7-20 2" fill="none" stroke="#fff" strokeWidth="6" />
          </g>
          <path d="M49.500 16h15v9h-15zM57 11v22" /><path d="M85 15.500h4" strokeWidth="4" /><path d="M96 24q1 4-3 6" />
          <rect x="110" y="10" width="7" height="14" rx="3.500" fill="#1070dc" stroke="none" />
          <path d="M107.500 19c0 11 12 11 12 0M113.500 27v5M109 33h9" strokeWidth="1.800" />
          <path d="M139.500 14h16v15h-16zM139 19h17M139 24h17M145 14v11M150.500 14v11" strokeWidth="1.800" />
          <g fill="#1070dc" stroke="none"><circle cx="173" cy="17" r="4" /><rect x="178.500" y="13" width="8" height="8" rx="2" /><rect x="169" y="23" width="8" height="8" rx="2" /><rect x="178.500" y="23" width="8" height="8" rx="2" /></g>
        </ImeIcons>
        <Watermark>CSDN @Williamcsj</Watermark>
      </Status>

      <Arrow width="260" height="147" aria-hidden="true">
        <path d="M0 0L19 1.500L17.500 5.500L258 145L13.500 12L10.500 15z" fill="#fb3a38" />
      </Arrow>
    </App_>
  );
}
